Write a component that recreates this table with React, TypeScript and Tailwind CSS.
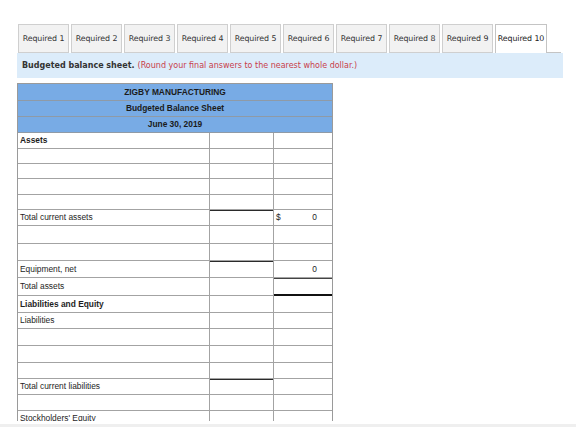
import React from "react";

type Row = {
  label?: string;
  h: number;
  bold?: boolean;
  c2Top?: boolean;
  c3?: React.ReactNode;
  c3Top?: boolean;
  c3Double?: boolean;
};

const rows: Row[] = [
  { label: "Assets", h: 16, bold: true },
  { h: 15 },
  { h: 15 },
  { h: 16 },
  { h: 15 },
  { label: "Total current assets", h: 16, c2Top: true, c3: "$0" },
  { h: 18 },
  { h: 17 },
  { label: "Equipment, net", h: 17, c2Top: true, c3: "0" },
  { label: "Total assets", h: 18, c3Top: true, c3Double: true },
  { label: "Liabilities and Equity", h: 17, bold: true },
  { label: "Liabilities", h: 16 },
  { h: 17 },
  { h: 17 },
  { h: 16 },
  { label: "Total current liabilities", h: 16, c2Top: true },
  { h: 16 },
  { label: "Stockholders' Equity", h: 16 },
  { h: 16 },
];

const tabs = Array.from({ length: 10 }, (_, i) => `Required ${i + 1}`);

function HeaderRow({ text, h }: { text: string; h: number }) {
  return (
    <div
      className="flex items-center justify-center border-b border-[#8f9aa6] bg-[#78abe5] font-bold text-[8.4px] text-[#1b1b1b]"
      style={{ height: h }}
    >
      {text}
    </div>
  );
}

export default function App() {
  return (
    <div className="w-[576px] h-[430px] bg-white overflow-hidden relative" style={{ fontFamily: '"DejaVu Sans", Verdana, sans-serif' }}>
      {/* tabs */}
      <div className="flex items-end pl-[18px] pt-[24px]">
        {tabs.map((t, i) => {
          const active = i === 9;
          return (
            <div
              key={t}
              className={
                active
                  ? "h-[29px] w-[52px] flex items-center justify-center border border-b-0 border-[#c4c4c4] bg-white text-[7.9px] text-[#222] tracking-[-0.1px]"
                  : "h-[29px] w-[51px] mr-[2px] flex items-center justify-center border border-[#cfcfcf] bg-[#f2f2f2] text-[7.9px] text-[#333] tracking-[-0.1px]"
              }
            >
              {t}
            </div>
          );
        })}
        <div className="w-[14px] border-b border-[#c4c4c4]" />
      </div>

      {/* instruction band */}
      <div className="ml-[17px] w-[546px] h-[25px] bg-[#dcecfa] flex items-center pl-[5px] text-[8px]">
        <span className="font-bold text-[#333]">Budgeted balance sheet.</span>
        <span className="ml-[3px] text-[#c8404a]">(Round your final answers to the nearest whole dollar.)</span>
      </div>

      {/* balance sheet */}
      <div className="mt-[5px] ml-[17px] h-[338px] overflow-hidden">
        <div
          className="w-[316px] border-l border-t border-r border-[#9a9a9a] text-[8.4px] text-[#1e1e1e]"
          style={{ fontFamily: '"Liberation Sans", Arial, sans-serif' }}
        >
          <HeaderRow text="ZIGBY MANUFACTURING" h={17} />
          <HeaderRow text="Budgeted Balance Sheet" h={16} />
          <HeaderRow text="June 30, 2019" h={16} />
          {rows.map((r, i) => (
            <div key={i} className="flex" style={{ height: r.h }}>
              <div
                className={
                  "w-[192px] border-r border-b border-[#a3a3a3] pl-[2px] flex items-center " +
                  (r.bold ? "font-bold" : "")
                }
              >
                {r.label}
              </div>
              <div
                className={
                  "w-[64px] border-r border-b border-[#a3a3a3] " +
                  (r.c2Top ? "shadow-[inset_0_1px_0_#2a2a2a]" : "")
                }
              />
              <div
                className={
                  "flex-1 border-b flex items-center pr-[15px] " +
                  (r.c3Double ? "border-[#111] shadow-[inset_0_-1px_0_#111] " : "border-[#a3a3a3] ") +
                  (r.c3Top ? "!shadow-[inset_0_1px_0_#444,inset_0_-1px_0_#111]" : "")
                }
              >
                {r.c3 === "$0" ? (
                  <>
                    <span className="pl-[2px]">$</span>
                    <span className="ml-auto">0</span>
                  </>
                ) : r.c3 ? (
                  <span className="ml-auto">{r.c3}</span>
                ) : null}
              </div>
            </div>
          ))}
        </div>
      </div>
      <div className="mt-[3px] h-[3px] bg-[#efefef]" />
    </div>
  );
}
